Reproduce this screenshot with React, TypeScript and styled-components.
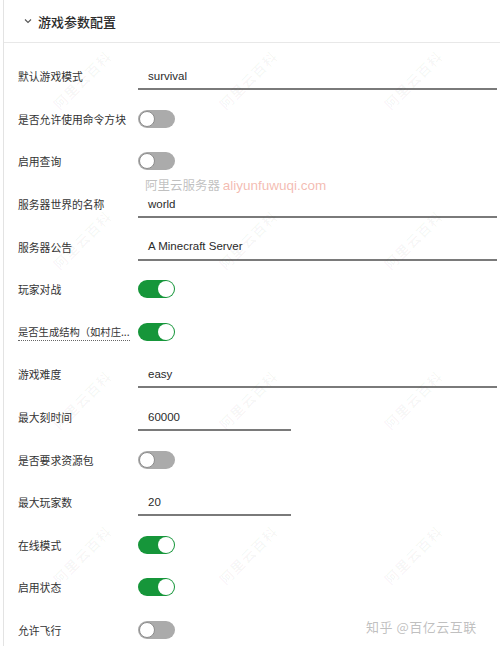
import styled, { createGlobalStyle } from "styled-components";

const GlobalStyle = createGlobalStyle`
  html, body {
    margin: 0;
    padding: 0;
    background: #ffffff;
  }
  body {
    font-family: "Liberation Sans", "Noto Sans CJK SC", sans-serif;
    color: #333333;
  }
`;

const Page = styled.div`
  position: relative;
  width: 500px;
  height: 646px;
  overflow: hidden;
  background: #ffffff;
`;

const Panel = styled.div`
  margin-left: 3px;
  height: 100%;
  border-left: 1px solid #e3e3e3;
`;

const Header = styled.div`
  display: flex;
  align-items: center;
  gap: 5px;
  height: 42px;
  padding-left: 19px;
  border-bottom: 1px solid #e8e8e8;
  font-family: "Noto Sans CJK SC", sans-serif;
  font-size: 13px;
  font-weight: 500;
  color: #2b2b2b;
`;

const Chevron = styled.svg`
  width: 10px;
  height: 10px;
  color: #555555;
`;

const Body = styled.div`
  padding-top: 12px;
`;

const Row = styled.div`
  display: flex;
  align-items: center;
  height: 42.6px;
  padding-left: 14px;
`;

const Label = styled.div<{ $hint?: boolean }>`
  width: 120px;
  flex-shrink: 0;
  font-family: "Noto Sans CJK SC", sans-serif;
  font-size: 10.8px;
  color: #333333;
  white-space: nowrap;
  box-sizing: border-box;
  padding-right: 4px;
  & span {
    display: inline-block;
    font-size: 10.3px;
    border-bottom: ${(p) => (p.$hint ? "1px dotted #666666" : "none")};
    padding-bottom: 1px;
  }
`;

const Field = styled.div<{ $short?: boolean }>`
  display: flex;
  align-items: center;
  box-sizing: border-box;
  width: ${(p) => (p.$short ? "153px" : "359px")};
  height: 27px;
  margin-top: 1px;
  padding-left: 10px;
  border-bottom: 2px solid #7a7a7a;
  font-family: "Liberation Sans", "Noto Sans CJK SC", sans-serif;
  font-size: 11.5px;
  color: #2a2a2a;
`;

const Track = styled.div<{ $on?: boolean }>`
  position: relative;
  width: 37px;
  height: 18px;
  border-radius: 9px;
  background: ${(p) => (p.$on ? "#16963a" : "#ababab")};
`;

const Knob = styled.div<{ $on?: boolean }>`
  position: absolute;
  top: 1px;
  left: ${(p) => (p.$on ? "20px" : "1px")};
  width: 16px;
  height: 16px;
  box-sizing: border-box;
  border-radius: 50%;
  background: #ffffff;
  border: ${(p) => (p.$on ? "none" : "1px solid #8c8c8c")};
`;

const Marks = styled.div`
  position: absolute;
  inset: 0;
  pointer-events: none;
`;

const Diagonal = styled.div`
  position: absolute;
  font-family: "Noto Sans CJK SC", sans-serif;
  font-size: 14px;
  font-weight: 700;
  letter-spacing: 1px;
  color: rgba(0, 0, 0, 0.035);
  transform: translate(-50%, -50%) rotate(-45deg);
  white-space: nowrap;
`;

const SiteMark = styled.div`
  position: absolute;
  left: 145px;
  top: 175px;
  font-family: "Noto Sans CJK SC", sans-serif;
  font-size: 12.5px;
  color: rgba(130, 130, 130, 0.5);
  white-space: nowrap;
  & b {
    font-family: "Liberation Sans", sans-serif;
    font-weight: 400;
    font-size: 13.5px;
    color: rgba(232, 120, 100, 0.5);
  }
`;

const ZhihuMark = styled.div`
  position: absolute;
  left: 366px;
  top: 617px;
  font-family: "Noto Sans CJK SC", sans-serif;
  font-size: 13px;
  color: rgba(150, 150, 150, 0.6);
  letter-spacing: 0.5px;
  white-space: nowrap;
`;

type Item =
  | { label: string; kind: "text"; value: string; short?: boolean; hint?: boolean }
  | { label: string; kind: "switch"; on: boolean; hint?: boolean };

const items: Item[] = [
  { label: "默认游戏模式", kind: "text", value: "survival" },
  { label: "是否允许使用命令方块", kind: "switch", on: false },
  { label: "启用查询", kind: "switch", on: false },
  { label: "服务器世界的名称", kind: "text", value: "world" },
  { label: "服务器公告", kind: "text", value: "A Minecraft Server" },
  { label: "玩家对战", kind: "switch", on: true },
  { label: "是否生成结构（如村庄...", kind: "switch", on: true, hint: true },
  { label: "游戏难度", kind: "text", value: "easy" },
  { label: "最大刻时间", kind: "text", value: "60000", short: true },
  { label: "是否要求资源包", kind: "switch", on: false },
  { label: "最大玩家数", kind: "text", value: "20", short: true },
  { label: "在线模式", kind: "switch", on: true },
  { label: "启用状态", kind: "switch", on: true },
  { label: "允许飞行", kind: "switch", on: false },
];

const markRows = [80, 240, 400, 555];
const markCols = [82, 248, 413];

const App = () => {
  return (
    <Page>
      <GlobalStyle />
      <Panel>
        <Header>
          <Chevron viewBox="0 0 10 10" fill="none">
            <path d="M2 3.5 L5 6.5 L8 3.5" stroke="currentColor" strokeWidth="1.1" />
          </Chevron>
          游戏参数配置
        </Header>
        <Body>
          {items.map((it) => (
            <Row key={it.label}>
              <Label $hint={it.hint}>
                {it.hint ? <span>{it.label}</span> : it.label}
              </Label>
              {it.kind === "text" ? (
                <Field $short={it.short}>{it.value}</Field>
              ) : (
                <Track $on={it.on}>
                  <Knob $on={it.on} />
                </Track>
              )}
            </Row>
          ))}
        </Body>
      </Panel>
      <Marks>
        {markRows.map((y) =>
          markCols.map((x) => (
            <Diagonal key={`${x}-${y}`} style={{ left: x, top: y }}>
              阿里云百科
            </Diagonal>
          ))
        )}
        <SiteMark>
          阿里云服务器 <b>aliyunfuwuqi.com</b>
        </SiteMark>
        <ZhihuMark>知乎 @百亿云互联</ZhihuMark>
      </Marks>
    </Page>
  );
};

export default App;
